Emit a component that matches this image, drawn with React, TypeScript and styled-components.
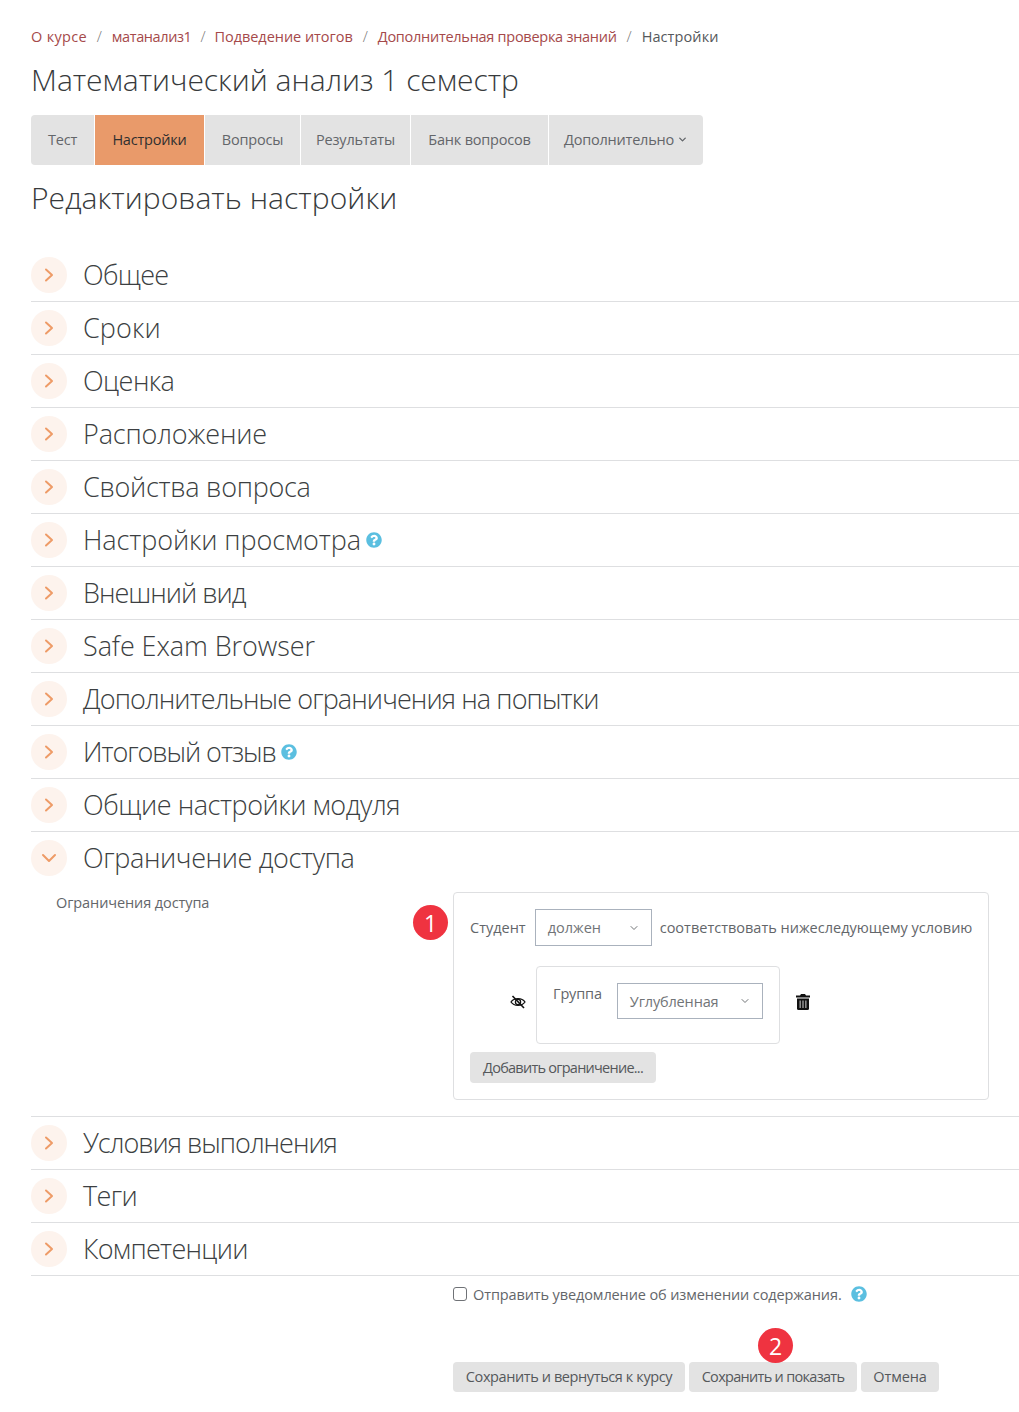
import React from "react";
import styled, { createGlobalStyle } from "styled-components";
import { ChevronDown } from "lucide-react";
import { FaQuestionCircle } from "react-icons/fa";

const Global = createGlobalStyle`
  html, body { margin: 0; padding: 0; background: #fff; }
  body { font-family: "Open Sans", "Noto Sans", sans-serif; font-weight: 300; color: #373a3c; }
  * { box-sizing: border-box; }
`;

const Page = styled.div`
  width: 1019px;
  height: 1412px;
  padding: 26px 0 0 31px;
  overflow: hidden;
`;
const Crumbs = styled.nav`
  display: flex;
  align-items: center;
  height: 20px;
  font-size: 14.5px;
`;
const Crumb = styled.span<{ $link?: boolean; $ls: number }>`
  color: ${(p) => (p.$link ? "#a5494a" : "#55585b")};
  font-weight: 400;
  letter-spacing: ${(p) => p.$ls}px;
  white-space: nowrap;
`;
const Sep = styled.span<{ $w?: number }>`
  width: ${(p) => p.$w ?? 25}px;
  text-align: center;
  color: #777;
  font-size: 15px;
`;
const Title = styled.h1`
  margin: 16px 0 0;
  font-size: 30px;
  line-height: 36px;
  height: 35px;
  font-weight: 300;
  letter-spacing: -0.02px;
  color: #373a3c;
`;
const Tabs = styled.div`
  display: flex;
  gap: 1px;
  margin-top: 18px;
  width: 672px;
  height: 50px;
  border-radius: 4px;
  overflow: hidden;
`;
const Tab = styled.div<{ $active?: boolean; $w: number }>`
  width: ${(p) => p.$w}px;
  flex: none;
  display: flex;
  align-items: center;
  justify-content: center;
  gap: 3px;
  padding-bottom: 2px;
  font-size: 14.5px;
  font-weight: 400;
  letter-spacing: -0.2px;
  white-space: nowrap;
  background: ${(p) => (p.$active ? "#e99a6a" : "#e3e3e3")};
  color: ${(p) => (p.$active ? "#2f2f2f" : "#63666a")};
`;
const Heading = styled.h2`
  margin: 15px 0 0;
  font-size: 30px;
  line-height: 36px;
  height: 53px;
  font-weight: 300;
  color: #373a3c;
  letter-spacing: 0.05px;
`;
const Sections = styled.div`
  margin-top: 16px;
`;
const Row = styled.div<{ $open?: boolean }>`
  display: flex;
  align-items: center;
  height: 53px;
  padding-bottom: 1px;
  border-bottom: 1px solid ${(p) => (p.$open ? "transparent" : "#dedfe1")};
`;
const Circle = styled.span`
  width: 36px;
  height: 36px;
  border-radius: 50%;
  background: #fdf3ed;
  display: flex;
  align-items: center;
  justify-content: center;
  flex: none;
`;
const RowText = styled.span<{ $ls: number }>`
  margin-left: 16px;
  font-size: 27px;
  font-weight: 300;
  color: #3c3f42;
  letter-spacing: ${(p) => p.$ls}px;
  white-space: nowrap;
`;
const Help = styled(FaQuestionCircle)`
  color: #5bbfe0;
  width: 16px;
  height: 16px;
  margin-left: 5px;
  flex: none;
`;
const CheckHelp = styled(Help)`
  margin-left: 9px;
`;
const Restrict = styled.div`
  display: grid;
  grid-template-columns: 397px 536px;
  padding: 7px 0 0 25px;
  border-bottom: 1px solid #dedfe1;
  height: 232px;
`;
const FieldLabel = styled.div`
  font-size: 14.5px;
  font-weight: 400;
  letter-spacing: -0.1px;
  color: #63666a;
  line-height: 22px;
`;
const BoxWrap = styled.div`
  position: relative;
  height: 208px;
`;
const Badge = styled.span<{ $left: number; $top: number }>`
  position: absolute;
  left: ${(p) => p.$left}px;
  top: ${(p) => p.$top}px;
  width: 35px;
  height: 35px;
  border-radius: 50%;
  background: #ef3340;
  color: #fff;
  font-size: 23px;
  font-weight: 400;
  display: flex;
  align-items: center;
  justify-content: center;
`;
const Box = styled.div`
  height: 208px;
  border: 1px solid #dedfe1;
  border-radius: 4px;
  padding: 16px;
  display: flex;
  flex-direction: column;
`;
const Line = styled.div`
  display: flex;
  align-items: center;
  gap: 8px;
  font-size: 14.5px;
  font-weight: 400;
  letter-spacing: 0;
  color: #63666a;
  white-space: nowrap;
`;
const Student = styled.span`
  margin-right: 1px;
`;
const Select = styled.span<{ $w: number; $h: number }>`
  width: ${(p) => p.$w}px;
  height: ${(p) => p.$h}px;
  border: 1px solid #aab2bd;
  padding: 0 11px 0 12px;
  display: flex;
  align-items: center;
  justify-content: space-between;
  color: #717477;
  flex: none;
`;
const CondRow = styled.div`
  display: flex;
  align-items: center;
  margin: 20px 0 0 40px;
`;
const EyeIcon = styled.svg`
  width: 16px;
  height: 14px;
  margin: 0 10px 6px 0;
  flex: none;
`;
const CondBox = styled.div`
  width: 244px;
  height: 78px;
  border: 1px solid #dedfe1;
  border-radius: 4px;
  padding: 16px;
  display: flex;
  gap: 15px;
  font-size: 14.5px;
  font-weight: 400;
  color: #63666a;
  letter-spacing: -0.15px;
`;
const GroupLabel = styled.span`
  line-height: 22px;
`;
const TrashIcon = styled.svg`
  width: 14px;
  height: 16px;
  margin: 0 0 6px 16px;
  flex: none;
`;
const Button = styled.span<{ $w: number; $h?: number; $ls: number }>`
  width: ${(p) => p.$w}px;
  height: ${(p) => p.$h ?? 30}px;
  background: #e3e3e3;
  border-radius: 4px;
  display: inline-flex;
  align-items: center;
  justify-content: center;
  padding-bottom: 1px;
  font-size: 14.5px;
  font-weight: 400;
  letter-spacing: ${(p) => p.$ls}px;
  color: #55585b;
  white-space: nowrap;
  flex: none;
`;
const AddRow = styled.div`
  margin-top: 8px;
`;
const Bottom = styled.div`
  margin-left: 422px;
`;
const CheckRow = styled.div`
  display: flex;
  align-items: center;
  margin-top: 8px;
  height: 20px;
  font-size: 14.5px;
  font-weight: 400;
  letter-spacing: -0.11px;
  color: #63666a;
  white-space: nowrap;
`;
const Check = styled.span`
  width: 14px;
  height: 14px;
  border: 1px solid #6f7276;
  border-radius: 3px;
  margin-right: 6px;
  flex: none;
`;
const Actions = styled.div`
  position: relative;
  display: flex;
  gap: 4px;
  margin-top: 58px;
`;

const rows1: [string, number, boolean?][] = [
  ["Общее", -0.7], ["Сроки", 0.1], ["Оценка", -0.57], ["Расположение", -0.15], ["Свойства вопроса", -0.27],
  ["Настройки просмотра", -0.1, true], ["Внешний вид", -1], ["Safe Exam Browser", -0.08],
  ["Дополнительные ограничения на попытки", -0.9], ["Итоговый отзыв", -1.05, true], ["Общие настройки модуля", -0.45],
];
const rows2: [string, number][] = [["Условия выполнения", -1], ["Теги", -0.65], ["Компетенции", -0.7]];

const ArrowRight = () => (
  <svg width="12" height="14" viewBox="0 0 12 14" fill="none" stroke="#ee9b67" strokeWidth="2" strokeLinecap="round" strokeLinejoin="round">
    <path d="M3 1.5 L9 7 L3 12.5" />
  </svg>
);
const ArrowDown = () => (
  <svg width="16" height="10" viewBox="0 0 16 10" fill="none" stroke="#ee9b67" strokeWidth="2" strokeLinecap="round" strokeLinejoin="round">
    <path d="M2 2 L8 8 L14 2" />
  </svg>
);
const Eye = () => (
  <EyeIcon viewBox="0 0 16 14" fill="none" stroke="#111">
    <path d="M1 7 C4 2.5 12 2.5 15 7 C12 11.5 4 11.5 1 7Z" strokeWidth="1.3" />
    <circle cx="8" cy="7" r="2.6" strokeWidth="1.3" />
    <path d="M2.5 1 L14 13" strokeWidth="1.6" />
  </EyeIcon>
);
const Trash = () => (
  <TrashIcon viewBox="0 0 14 16">
    <path d="M5 0h4l1 1.5h4v2H0v-2h4z" fill="#111" />
    <path d="M1 4.5h12v10a1.5 1.5 0 0 1-1.5 1.5h-9A1.5 1.5 0 0 1 1 14.5z" fill="#111" />
    <path d="M3.4 6.5h1.6v7.5H3.4zM6.2 6.5h1.6v7.5H6.2zM9 6.5h1.6v7.5H9z" fill="#8a8a8a" />
  </TrashIcon>
);

export default function App() {
  return (
    <Page>
      <Global />
      <Crumbs>
        <Crumb $link $ls={0.3}>О курсе</Crumb><Sep>/</Sep>
        <Crumb $link $ls={-0.4}>матанализ1</Crumb><Sep $w={23}>/</Sep>
        <Crumb $link $ls={-0.04}>Подведение итогов</Crumb><Sep>/</Sep>
        <Crumb $link $ls={-0.27}>Дополнительная проверка знаний</Crumb><Sep>/</Sep>
        <Crumb $ls={0.1}>Настройки</Crumb>
      </Crumbs>
      <Title>Математический анализ 1 семестр</Title>
      <Tabs>
        <Tab $w={63}>Тест</Tab>
        <Tab $w={109} $active>Настройки</Tab>
        <Tab $w={95}>Вопросы</Tab>
        <Tab $w={109}>Результаты</Tab>
        <Tab $w={137}>Банк вопросов</Tab>
        <Tab $w={154}>Дополнительно<ChevronDown size={11} strokeWidth={3} /></Tab>
      </Tabs>
      <Heading>Редактировать настройки</Heading>
      <Sections>
        {rows1.map(([t, ls, h]) => (
          <Row key={t}><Circle><ArrowRight /></Circle><RowText $ls={ls}>{t}</RowText>{h && <Help />}</Row>
        ))}
        <Row $open>
          <Circle><ArrowDown /></Circle>
          <RowText $ls={-0.37}>Ограничение доступа</RowText>
        </Row>
        <Restrict>
          <FieldLabel>Ограничения доступа</FieldLabel>
          <BoxWrap>
            <Badge $left={-40} $top={13}>1</Badge>
            <Box>
              <Line>
                <Student>Студент</Student>
                <Select $w={117} $h={37}>должен<ChevronDown size={12} /></Select>
                соответствовать нижеследующему условию
              </Line>
              <CondRow>
                <Eye />
                <CondBox>
                  <GroupLabel>Группа</GroupLabel>
                  <Select $w={146} $h={36}>Углубленная<ChevronDown size={12} /></Select>
                </CondBox>
                <Trash />
              </CondRow>
              <AddRow><Button $w={186} $h={31} $ls={-0.75}>Добавить ограничение...</Button></AddRow>
            </Box>
          </BoxWrap>
        </Restrict>
        {rows2.map(([t, ls]) => (
          <Row key={t}><Circle><ArrowRight /></Circle><RowText $ls={ls}>{t}</RowText></Row>
        ))}
      </Sections>
      <Bottom>
        <CheckRow>
          <Check />
          Отправить уведомление об изменении содержания.
          <CheckHelp />
        </CheckRow>
        <Actions>
          <Badge $left={305} $top={-34}>2</Badge>
          <Button $w={232} $ls={-0.4}>Сохранить и вернуться к курсу</Button>
          <Button $w={168} $ls={-0.7}>Сохранить и показать</Button>
          <Button $w={78} $ls={-0.1}>Отмена</Button>
        </Actions>
      </Bottom>
    </Page>
  );
}
